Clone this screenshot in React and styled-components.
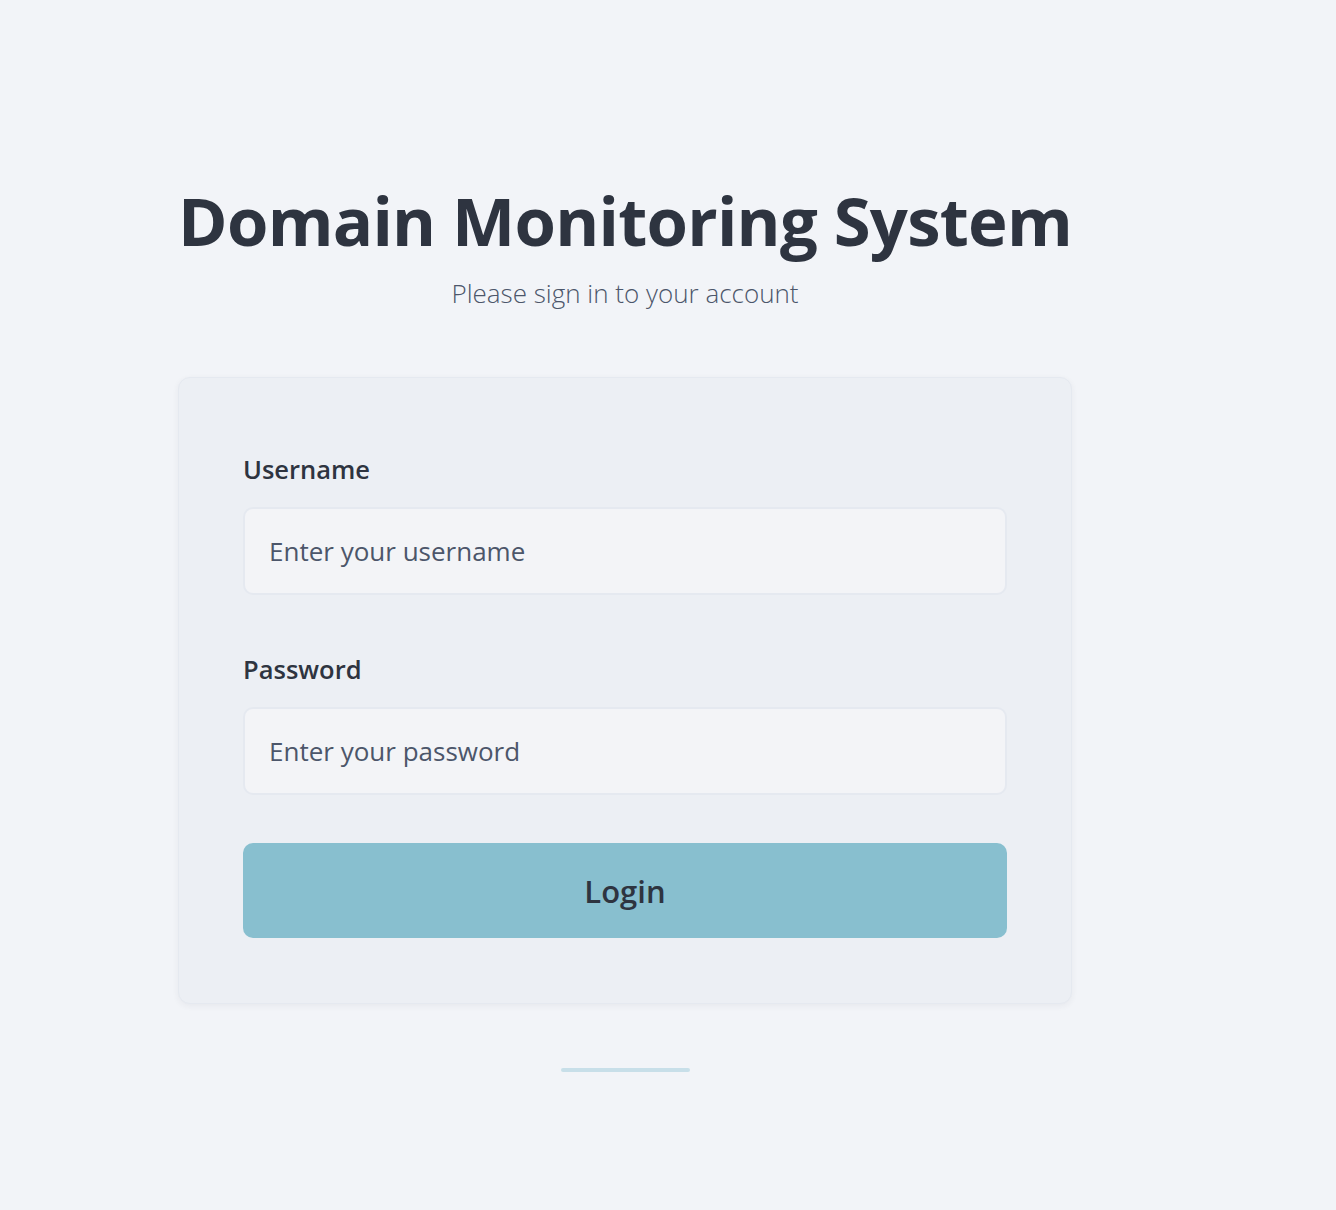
import React from 'react';
import styled, { createGlobalStyle } from 'styled-components';

const GlobalStyle = createGlobalStyle`
  html, body {
    margin: 0;
    padding: 0;
    background: #f2f4f8;
    font-family: "Open Sans", "Noto Sans", sans-serif;
    color: #2e3440;
  }
  * { box-sizing: border-box; }
`

const Page = styled.main`
  width: 1250px;
  min-height: 1210px;
  display: flex;
  flex-direction: column;
  align-items: center;
  padding-top: 175px;
`

const Title = styled.h1`
  margin: 0;
  font-size: 67px;
  font-weight: 700;
  line-height: 90px;
  letter-spacing: -0.75px;
  color: #2e3440;
`

const Subtitle = styled.p`
  margin: 11px 0 0;
  font-size: 26px;
  font-weight: 300;
  line-height: 34px;
  color: #4c566a;
`

const Card = styled.form`
  margin-top: 67px;
  width: 894px;
  padding: 76px 64px 65px;
  background: #eceff4;
  border: 1px solid #e5e9f0;
  border-radius: 12px;
  box-shadow: 0 2px 6px rgba(46, 52, 64, 0.06);
  display: flex;
  flex-direction: column;
`

const Field = styled.div`
  display: flex;
  flex-direction: column;
  gap: 23px;
  margin-bottom: ${p => p.last ? '48px' : '59px'};
`

const Label = styled.label`
  font-size: 25.5px;
  font-weight: 600;
  line-height: 30px;
  color: #2e3440;
`

const Input = styled.input`
  width: 100%;
  height: 88px;
  padding: 0 24px;
  background: #f3f4f7;
  border: 2px solid #e5e9f0;
  border-radius: 10px;
  font-family: inherit;
  font-size: 26px;
  color: #2e3440;
  outline: none;

  &::placeholder {
    color: #4c566a;
  }
`

const Button = styled.button`
  width: 100%;
  height: 95px;
  border: none;
  border-radius: 10px;
  background: #88bfcf;
  color: #2e3440;
  font-family: inherit;
  font-size: 31px;
  font-weight: 600;
  cursor: pointer;
`

const Divider = styled.div`
  margin-top: 64px;
  width: 129px;
  height: 4px;
  border-radius: 2px;
  background: #c8dfe9;
`

export default function App() {
  return (
    <>
      <GlobalStyle />
      <Page>
        <Title>Domain Monitoring System</Title>
        <Subtitle>Please sign in to your account</Subtitle>
        <Card onSubmit={e => e.preventDefault()}>
          <Field>
            <Label htmlFor="username">Username</Label>
            <Input id="username" type="text" placeholder="Enter your username" />
          </Field>
          <Field last>
            <Label htmlFor="password">Password</Label>
            <Input id="password" type="password" placeholder="Enter your password" />
          </Field>
          <Button type="submit">Login</Button>
        </Card>
        <Divider />
      </Page>
    </>
  );
}
